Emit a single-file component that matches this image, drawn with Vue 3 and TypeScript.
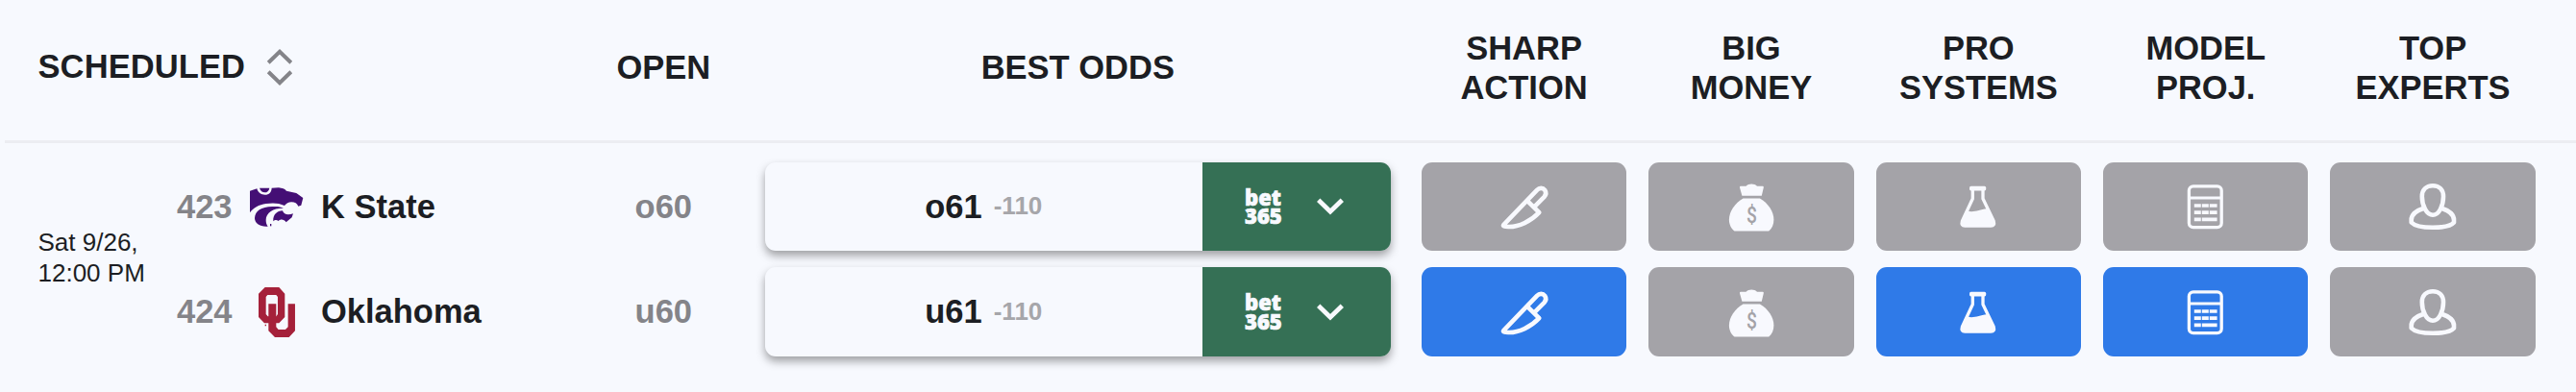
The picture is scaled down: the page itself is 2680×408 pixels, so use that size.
<script setup lang="ts">
type IconName = 'knife' | 'bag' | 'flask' | 'calc' | 'person'

interface Side {
  num: string
  name: string
  logo: 'ksu' | 'ou'
  open: string
  line: string
  price: string
  active: IconName[]
}

const indicators: { icon: IconName; lines: [string, string] }[] = [
  { icon: 'knife', lines: ['SHARP', 'ACTION'] },
  { icon: 'bag', lines: ['BIG', 'MONEY'] },
  { icon: 'flask', lines: ['PRO', 'SYSTEMS'] },
  { icon: 'calc', lines: ['MODEL', 'PROJ.'] },
  { icon: 'person', lines: ['TOP', 'EXPERTS'] },
]

const sides: Side[] = [
  { num: '423', name: 'K State', logo: 'ksu', open: 'o60', line: 'o61', price: '-110', active: [] },
  { num: '424', name: 'Oklahoma', logo: 'ou', open: 'u60', line: 'u61', price: '-110', active: ['knife', 'flask', 'calc'] },
]
</script>

<template>
  <main class="board">
    <header class="head">
      <div class="scheduled">
        <span>SCHEDULED</span>
        <svg class="sort" viewBox="0 0 28 40" fill="none" stroke="#848489" stroke-width="4">
          <path d="M2.2 15.2 14 3.8 25.8 15.2M2.2 24.8 14 36.2 25.8 24.8" />
        </svg>
      </div>
      <div class="title">OPEN</div>
      <div class="title">BEST ODDS</div>
      <div class="indicators">
        <div v-for="ind in indicators" :key="ind.icon" class="title stacked">
          <span v-for="l in ind.lines" :key="l">{{ l }}</span>
        </div>
      </div>
    </header>

    <section class="game">
      <div class="time"><span>Sat 9/26,</span><span>12:00 PM</span></div>
      <div class="sides">
        <div v-for="side in sides" :key="side.num" class="side">
          <div class="team">
            <span class="num">{{ side.num }}</span>
            <span class="logo">
              <svg v-if="side.logo === 'ksu'" class="ksu" viewBox="60 44 166 123" fill="#440f75">
                <path d="M60 55 82 48C85 60 95 67 107 67 120 67 127 60 128 46L150 45C160 46 170 49 174 55L205 62 226 77 220 100 211 103C208 94 200 90 190 90 180 90 174 95 168 101 150 92 130 92 110 95 88 98 70 108 60 123Z" />
                <path d="M90 46H121C119 56 113 60 107 60 99 60 93 55 90 46Z" />
                <path d="M75 140C76 118 95 105 130 104 145 103 156 104 165 109 135 108 110 122 110 146 110 155 112 161 116 166 92 168 75 156 75 140Z" />
                <path d="M133 150C131 130 145 117 162 117 166 130 180 131 195 126L191 138 173 153C167 143 155 142 149 149 143 144 137 146 133 150Z" />
                <path d="M123 158h4v7h-4z" />
              </svg>
              <svg v-else class="ou" viewBox="86 356 115 156" fill="#a5213a">
                <path fill-rule="evenodd" d="M106 356H150L168 376V449L150 468H104L86 449V376ZM114 380 109 386V440L115 447H141L146 440V386L141 380Z" />
                <path d="M117 408H141V480L148 488H170L178 480V408H200V492L181 512H137L117 492Z" />
                <path d="M106 472h4v5h-4z" />
              </svg>
            </span>
            <span class="name">{{ side.name }}</span>
          </div>
          <div class="open">{{ side.open }}</div>
          <div class="odds">
            <div class="quote">
              <span class="line">{{ side.line }}</span>
              <span class="price">{{ side.price }}</span>
            </div>
            <div class="book">
              <div class="brand"><span>bet</span><span>365</span></div>
              <svg class="chevron" viewBox="0 0 28 18" fill="none" stroke="#f8f9fe" stroke-width="4.8">
                <path d="M1.7 2.2 14 14.2 26.3 2.2" />
              </svg>
            </div>
          </div>
          <div class="indicators">
            <div
              v-for="ind in indicators"
              :key="ind.icon"
              class="tile"
              :class="{ on: side.active.includes(ind.icon) }"
            >
              <svg v-if="ind.icon === 'knife'" viewBox="0 0 60 60" class="icon outline">
                <path d="M33.3 24.3 45.3 36.2C37 45 24 51.5 13 51 9 51 7.3 50.2 8.2 49.1L43 12.8C45.5 10.2 49.3 10.2 51.2 12.8 52.8 15.3 52.6 17.8 50.6 19.9L39.7 30.8" />
              </svg>
              <svg v-else-if="ind.icon === 'bag'" viewBox="0 0 60 60" class="icon">
                <path d="M19 8.8H24.5C27 5.7 33.5 5.7 36 8.8H41.8Q43.1 8.8 42.8 10.2L40.8 18.8H20.4L18 10.2Q17.7 8.8 19 8.8Z" />
                <path d="M21.5 21.5H38.9C47.5 26.5 53.4 35 53.4 43.8 53.4 48.5 51.5 53 48.2 55.5H12.5C9 53 6.9 48.5 6.9 43.8 6.9 35 13 26.5 21.5 21.5Z" />
                <text class="dollar" transform="translate(30.4 46.6) scale(.8 1)" text-anchor="middle">$</text>
              </svg>
              <svg v-else-if="ind.icon === 'flask'" viewBox="0 0 60 60" class="icon">
                <rect x="21" y="8.8" width="17.2" height="4.6" rx="1.6" />
                <path d="M24.3 12V21.8L13.4 45.2Q12 50 16.2 50H43.3Q47.6 50 46.2 45.2L35 21.8V12" class="thin" />
                <path d="M19 34.6C26 36.6 31 32.8 39 32.2L46.8 46 45 50.5H15L13 46Z" />
              </svg>
              <svg v-else-if="ind.icon === 'calc'" viewBox="0 0 60 60" class="icon">
                <rect x="12.4" y="8.9" width="33.8" height="42.7" rx="4.4" class="thin" />
                <path d="M12 19.5H47V22.6H12ZM17.8 27.2h7v3.6h-7zM25.8 27.2h7v3.6h-7zM33.8 27.2h7.8v3.6h-7.8zM17.8 34.3h7v3.6h-7zM25.8 34.3h7v3.6h-7zM33.8 34.3h7.8v3.6h-7.8zM17.8 41.4h7v3.8h-7zM25.8 41.4h15.8v3.8H25.8z" />
              </svg>
              <svg v-else viewBox="0 0 60 60" class="icon outline">
                <path d="M30 8.2C37 8.2 41 12.8 41 19.5 41 29 36.5 38.8 30 38.8 23.5 38.8 18.8 29 18.8 19.5 18.8 12.8 23 8.2 30 8.2ZM20.8 31.8C12 34.5 7.7 39 7.7 44V46.5C11 50 20 51.8 30 51.8S49 50 52 46.5V44C52 39 47.8 34.5 39 31.8" />
              </svg>
            </div>
          </div>
        </div>
      </div>
    </section>
  </main>
</template>

<style>
body {
  background: #f7f9fe;
}
</style>

<style scoped>
.board {
  width: 2680px;
  height: 408px;
  overflow: hidden;
  background: #f7f9fe;
  color: #1c1e23;
  font: 700 34.5px/41px 'Liberation Sans', Arial, sans-serif;
}
.head {
  display: grid;
  grid-template-columns: 585px 210.6px 651.4px 1191px;
  align-items: center;
  height: 141px;
  padding-bottom: 5px;
  position: relative;
}
.head::after {
  content: '';
  position: absolute;
  left: 5px;
  right: 0;
  bottom: -3px;
  height: 3px;
  background: #ecedf2;
}
.scheduled {
  display: flex;
  align-items: center;
  gap: 22px;
  padding: 0 0 2px 39.5px;
  letter-spacing: 0.1px;
}
.sort {
  width: 28px;
  height: 40px;
}
.title {
  text-align: center;
}
.stacked {
  display: flex;
  flex-direction: column;
}
.indicators {
  display: grid;
  grid-template-columns: repeat(5, 213.2px);
  gap: 23.2px;
  padding-left: 32px;
}
.game {
  display: grid;
  grid-template-columns: 184px auto;
  padding-top: 23px;
}
.time {
  display: flex;
  flex-direction: column;
  justify-content: center;
  padding: 0 0 4px 39.5px;
  font-weight: 400;
  font-size: 26px;
  line-height: 32px;
}
.sides {
  display: grid;
  gap: 17.1px;
}
.side {
  display: grid;
  grid-template-columns: 401px 210.6px 651.4px 1191px;
  align-items: center;
  height: 92.3px;
}
.team {
  display: flex;
  align-items: center;
}
.num {
  width: 76px;
  color: #848489;
}
.logo {
  display: flex;
  justify-content: center;
  width: 56px;
  margin-right: 18px;
}
.ksu {
  width: 55.3px;
  height: 41px;
}
.ou {
  width: 38.3px;
  height: 52px;
}
.open {
  text-align: center;
  color: #848489;
}
.odds {
  display: flex;
  height: 92.3px;
  border-radius: 11px;
  background: #f7f9fe;
  box-shadow: 0 5px 10px rgba(0, 0, 0, 0.36);
}
.quote {
  flex: 1;
  display: flex;
  align-items: center;
  justify-content: center;
  gap: 12px;
}
.price {
  padding-bottom: 1px;
  font-size: 26px;
  color: #a6a6aa;
}
.book {
  display: flex;
  align-items: center;
  width: 196px;
  padding-left: 44px;
  box-sizing: border-box;
  border-radius: 0 11px 11px 0;
  background: #357055;
  color: #f8f9fe;
}
.brand {
  display: flex;
  flex-direction: column;
  width: 75px;
  font: 800 22px/19.5px 'Open Sans', 'Noto Sans', sans-serif;
  -webkit-text-stroke: 0.7px currentColor;
}
.chevron {
  width: 28px;
  height: 18px;
}
.tile {
  display: flex;
  align-items: center;
  justify-content: center;
  height: 92.3px;
  border-radius: 11px;
  background: #a4a3a8;
  color: #a4a3a8;
}
.tile.on {
  background: #2f7ae8;
}
.icon {
  width: 60px;
  height: 60px;
  fill: #f8f9fe;
}
.outline {
  fill: none;
  stroke: #f8f9fe;
  stroke-width: 4.6;
  stroke-linejoin: round;
}
.thin {
  fill: none;
  stroke: #f8f9fe;
  stroke-width: 3.3;
}
.dollar {
  font: 500 24px Roboto, sans-serif;
  fill: currentColor;
}
</style>
